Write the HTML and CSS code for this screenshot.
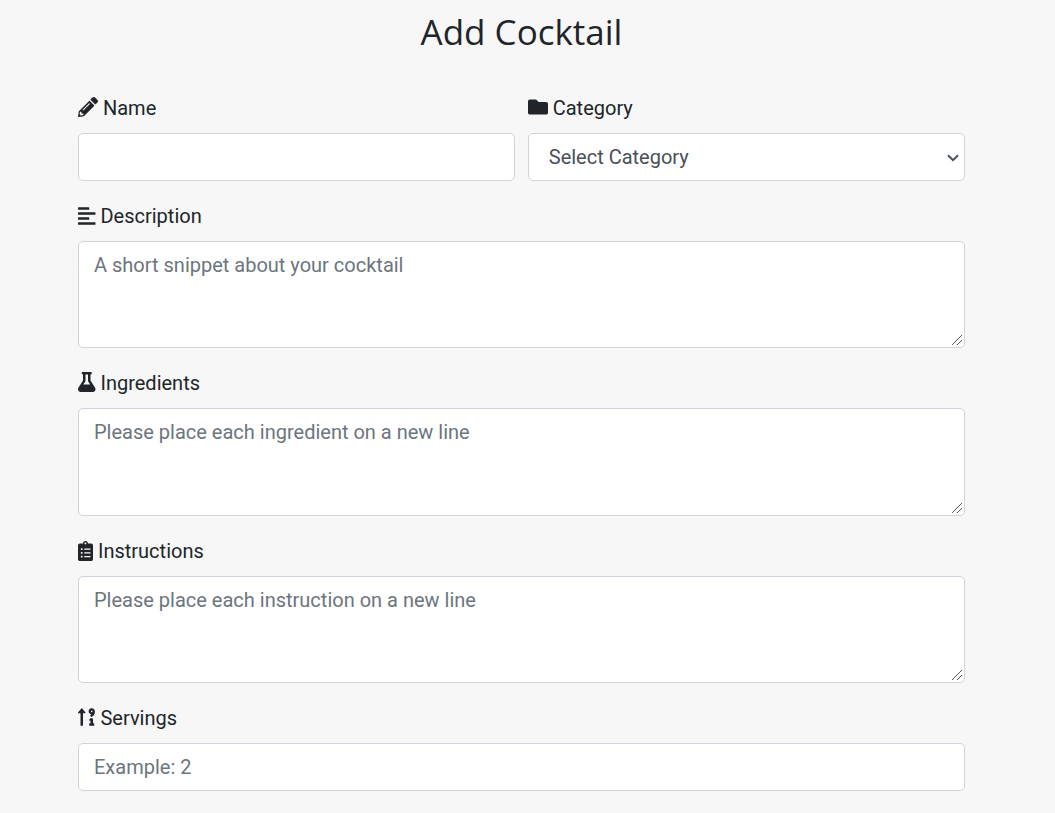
FILE: index.html
```html
<!DOCTYPE html>
<html lang="en">
<head>
<meta charset="utf-8">
<title>Add Cocktail</title>
<link rel="stylesheet" href="styles.css">
</head>
<body>
<main class="page">
  <h1 class="title">Add Cocktail</h1>
  <form class="form">
    <div class="row">
      <div class="group">
        <label class="label" for="name"><svg class="icon" viewBox="0 0 512 512"><path d="M497.9 142.1l-46.1 46.1c-4.7 4.7-12.3 4.7-17 0l-111-111c-4.7-4.7-4.7-12.3 0-17l46.1-46.1c18.7-18.7 49.1-18.7 67.9 0l60.1 60.1c18.8 18.7 18.8 49.1 0 67.9zM284.2 99.8L21.6 362.4.4 483.9c-2.9 16.4 11.4 30.6 27.8 27.8l121.5-21.3 262.6-262.6c4.7-4.7 4.7-12.3 0-17l-111-111c-4.8-4.7-12.4-4.7-17.1 0zM124.1 339.9c-5.5-5.5-5.5-14.3 0-19.8l154-154c5.5-5.5 14.3-5.5 19.8 0s5.5 14.3 0 19.8l-154 154c-5.5 5.5-14.3 5.5-19.8 0zM88 424h48v36.3l-64.5 11.3-31.1-31.1L51.7 376H88v48z"/></svg> Name</label>
        <input class="control" id="name" type="text">
      </div>
      <div class="group">
        <label class="label" for="category"><svg class="icon" viewBox="0 0 512 512"><path d="M464 128H272l-64-64H48C21.49 64 0 85.49 0 112v288c0 26.51 21.49 48 48 48h416c26.51 0 48-21.49 48-48V176c0-26.51-21.49-48-48-48z"/></svg> Category</label>
        <div class="field">
          <select class="control control-select" id="category"><option>Select Category</option></select>
          <svg class="chevron" viewBox="0 0 12 8"><path d="M1 1.2l5 5 5-5"/></svg>
        </div>
      </div>
    </div>
    <div class="group">
      <label class="label" for="description"><svg class="icon icon-medium icon-low" viewBox="0 0 448 512"><path d="M12.83 352h262.34A12.82 12.82 0 0 0 288 339.17v-38.34A12.82 12.82 0 0 0 275.17 288H12.83A12.82 12.82 0 0 0 0 300.83v38.34A12.82 12.82 0 0 0 12.83 352zm0-256h262.34A12.82 12.82 0 0 0 288 83.17V44.83A12.82 12.82 0 0 0 275.17 32H12.83A12.82 12.82 0 0 0 0 44.83v38.34A12.82 12.82 0 0 0 12.83 96zM432 160H16a16 16 0 0 0-16 16v32a16 16 0 0 0 16 16h416a16 16 0 0 0 16-16v-32a16 16 0 0 0-16-16zm0 256H16a16 16 0 0 0-16 16v32a16 16 0 0 0 16 16h416a16 16 0 0 0 16-16v-32a16 16 0 0 0-16-16z"/></svg> Description</label>
      <div class="field">
        <textarea class="control control-area control-low" id="description" rows="3" placeholder="A short snippet about your cocktail"></textarea>
        <svg class="grip" viewBox="0 0 12 12"><path d="M1 11L11 1M6 11l5-5"/></svg>
      </div>
    </div>
    <div class="group">
      <label class="label" for="ingredients"><svg class="icon icon-medium" viewBox="0 0 448 512"><path d="M437.2 403.5L320 215V64h8c13.3 0 24-10.7 24-24V24c0-13.3-10.7-24-24-24H120c-13.3 0-24 10.7-24 24v16c0 13.3 10.7 24 24 24h8v151L10.8 403.5C-18.5 450.6 15.3 512 70.9 512h306.2c55.7 0 89.4-61.5 60.1-108.5zM137.9 320l48.2-77.6c3.7-5.2 5.8-11.6 5.8-18.4V64h64v160c0 6.9 2.2 13.2 5.8 18.4l48.2 77.6h-172z"/></svg> Ingredients</label>
      <div class="field">
        <textarea class="control control-area" id="ingredients" rows="3" placeholder="Please place each ingredient on a new line"></textarea>
        <svg class="grip" viewBox="0 0 12 12"><path d="M1 11L11 1M6 11l5-5"/></svg>
      </div>
    </div>
    <div class="group">
      <label class="label" for="instructions"><svg class="icon icon-narrow icon-low" viewBox="0 0 384 512"><path d="M336 64h-80c0-35.3-28.7-64-64-64s-64 28.7-64 64H48C21.5 64 0 85.5 0 112v352c0 26.5 21.5 48 48 48h288c26.5 0 48-21.5 48-48V112c0-26.5-21.5-48-48-48zM96 424c-13.3 0-24-10.7-24-24s10.7-24 24-24 24 10.7 24 24-10.7 24-24 24zm0-96c-13.3 0-24-10.7-24-24s10.7-24 24-24 24 10.7 24 24-10.7 24-24 24zm0-96c-13.3 0-24-10.7-24-24s10.7-24 24-24 24 10.7 24 24-10.7 24-24 24zm96-192c13.3 0 24 10.7 24 24s-10.7 24-24 24-24-10.7-24-24 10.7-24 24-24zm128 368c0 4.4-3.6 8-8 8H168c-4.4 0-8-3.6-8-8v-16c0-4.4 3.6-8 8-8h144c4.4 0 8 3.6 8 8v16zm0-96c0 4.4-3.6 8-8 8H168c-4.4 0-8-3.6-8-8v-16c0-4.4 3.6-8 8-8h144c4.4 0 8 3.6 8 8v16zm0-96c0 4.4-3.6 8-8 8H168c-4.4 0-8-3.6-8-8v-16c0-4.4 3.6-8 8-8h144c4.4 0 8 3.6 8 8v16z"/></svg> Instructions</label>
      <div class="field">
        <textarea class="control control-area control-low" id="instructions" rows="3" placeholder="Please place each instruction on a new line"></textarea>
        <svg class="grip" viewBox="0 0 12 12"><path d="M1 11L11 1M6 11l5-5"/></svg>
      </div>
    </div>
    <div class="group">
      <label class="label" for="servings"><svg class="icon icon-medium" viewBox="0 0 448 512"><path d="M16 160h48v304a16 16 0 0 0 16 16h32a16 16 0 0 0 16-16V160h48c14.21 0 21.38-17.24 11.31-27.31l-80-96a16 16 0 0 0-22.62 0l-80 96C-5.35 142.74 1.77 160 16 160zM400 416h-16V304a16 16 0 0 0-16-16h-48a16 16 0 0 0-14.29 8.83l-16 32A16 16 0 0 0 304 352h16v64h-16a16 16 0 0 0-16 16v32a16 16 0 0 0 16 16h96a16 16 0 0 0 16-16v-32a16 16 0 0 0-16-16zM330.17 34.91a79 79 0 0 0-55 54.17c-14.27 51.05 21.19 97.77 68.83 102.53a84.07 84.07 0 0 1-20.85 12.91c-7.57 3.4-10.8 12.47-8.18 20.34l9.9 20c2.87 8.63 12.53 13.49 20.9 9.91 58-24.76 86.25-61.61 86.25-132V112c-.02-51.21-48.4-91.34-101.85-77.09zM352 132a20 20 0 1 1 20-20 20 20 0 0 1-20 20z"/></svg> Servings</label>
      <input class="control" id="servings" type="text" placeholder="Example: 2">
    </div>
  </form>
</main>
</body>
</html>
```
FILE: styles.css
```css
*, *::before, *::after { box-sizing: border-box; }

body {
  margin: 0;
  background: #f7f7f7;
  color: #212529;
  font: 400 20px/30px Roboto, sans-serif;
  overflow: hidden;
}

.page {
  width: 887px;
  margin-left: 78px;
  padding-top: 11px;
}

.title {
  margin: 0 0 40px;
  text-align: center;
  font: 400 35px/42px "Open Sans", sans-serif;
}

.row {
  display: grid;
  grid-template-columns: 1fr 1fr;
  column-gap: 12.5px;
}

.group { margin-bottom: 20px; }

.label {
  display: block;
  height: 30px;
  margin-bottom: 10px;
}

.icon {
  display: inline-block;
  width: 20px;
  height: 20px;
  vertical-align: -2px;
  fill: currentColor;
}

.icon-medium { width: 17.5px; }
.icon-narrow { width: 15px; }
.icon-low { vertical-align: -3px; }

.field { position: relative; }

.control {
  display: block;
  width: 100%;
  height: 47.5px;
  margin: 0;
  padding: 7.5px 15px;
  border: 1px solid #ced4da;
  border-radius: 5px;
  background: #fff;
  color: #495057;
  font: inherit;
  outline: 0;
}

.control-select {
  appearance: none;
  padding-left: 20px;
}

.control-area {
  height: 107.5px;
  overflow: auto;
  resize: none;
}

.control-low { padding-top: 8px; }

.control::placeholder {
  color: #6c757d;
  opacity: 1;
}

.chevron {
  position: absolute;
  top: 21px;
  right: 6px;
  width: 12px;
  height: 8px;
  fill: none;
  stroke: #495057;
  stroke-width: 2;
}

.grip {
  position: absolute;
  right: 2px;
  bottom: 2px;
  width: 12px;
  height: 12px;
  fill: none;
  stroke: #55585c;
  stroke-width: 1;
}
```
